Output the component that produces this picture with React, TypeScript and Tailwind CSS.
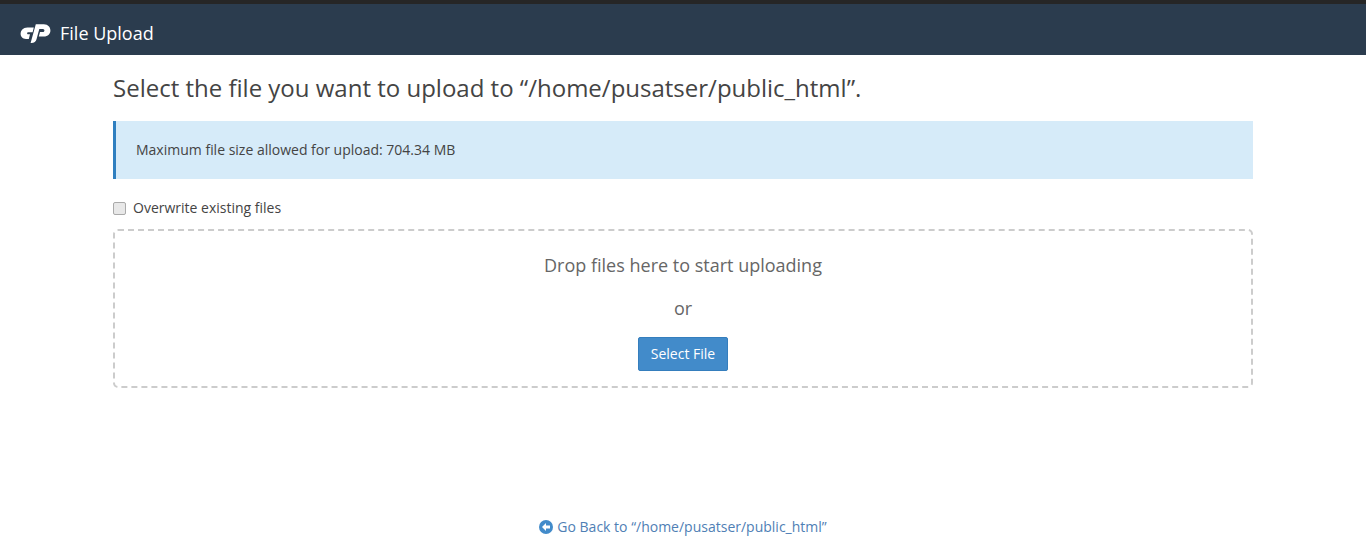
import React from "react";

function Logo() {
  return (
    <svg width="31" height="21" viewBox="0 0 31 21" fill="white" className="shrink-0">
      <path d="M7.500 4.500H13.800L12.600 9.300H8.500C6.900 9.300 6.500 11.300 8.200 11.300H10L8.800 16H6C-1.800 16 -1 4.500 7.500 4.500Z" />
      <path d="M15.800 1.200H23.800C32.500 1.200 32.800 13.500 23.600 13.500H18.800L20 9H22.900C24.900 9 25 6 22.900 6H19.300L16.600 16C15.900 18.600 14.200 20 11.400 20H10.600Z" />
    </svg>
  );
}

export default function App() {
  return (
    <div className="h-[552px] bg-white font-['Open_Sans',sans-serif] text-[#444] overflow-hidden">
      <header className="h-[55px] bg-[#2b3c4e] border-t-[4px] border-[#262626] flex items-center pl-[20px] gap-[9px] pt-[7px]">
        <Logo />
        <span className="text-white text-[18px]">File Upload</span>
      </header>
      <main className="mx-[113px] flex flex-col">
        <h1 className="text-[24px] leading-[26px] mt-[20px]">Select the file you want to upload to “/home/pusatser/public_html”.</h1>
        <div className="mt-[20px] h-[58px] bg-[#d6ebf9] border-l-[3px] border-[#2f7fc0] flex items-center pl-[20px] pb-[2px] text-[14px]">Maximum file size allowed for upload: 704.34 MB</div>
        <label className="mt-[18px] flex items-center gap-[7px] text-[14px] h-[20px]">
          <span className="w-[13px] h-[13px] mt-[2px] rounded-[2px] border border-[#aaa] bg-[#e8e8e8]" />
          Overwrite existing files
        </label>
        <div className="mt-[12px] h-[159px] border-2 border-dashed border-[#ccc] rounded-[5px] flex flex-col items-center text-[#666]">
          <div className="text-[18px] mt-[21px] leading-[26px]">Drop files here to start uploading</div>
          <div className="text-[18px] mt-[17px] leading-[26px]">or</div>
          <button className="mt-[16px] h-[34px] px-[12px] pb-[2px] bg-[#428bca] border border-[#357ebd] rounded-[2px] text-white text-[14px]">Select File</button>
        </div>
        <a className="mt-[128px] flex items-center justify-center text-[#4f80b5] text-[14px] gap-[4px]">
          <svg width="14" height="14" viewBox="0 0 14 14"><circle cx="7" cy="7" r="7" fill="#428bca"/><path d="M7 3 3 7l4 4V8.500h4v-3H7z" fill="white"/></svg>
          Go Back to “/home/pusatser/public_html”
        </a>
      </main>
    </div>
  );
}
